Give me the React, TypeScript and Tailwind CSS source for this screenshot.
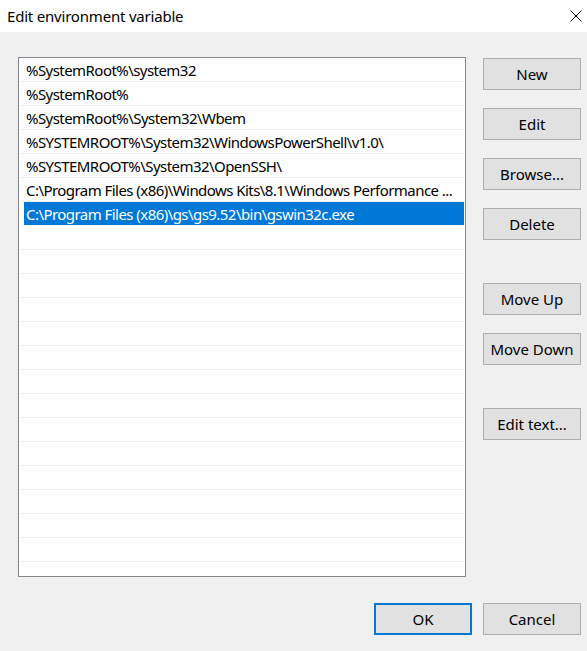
import React from 'react'

const PATHS = [
  '%SystemRoot%\\system32',
  '%SystemRoot%',
  '%SystemRoot%\\System32\\Wbem',
  '%SYSTEMROOT%\\System32\\WindowsPowerShell\\v1.0\\',
  '%SYSTEMROOT%\\System32\\OpenSSH\\',
  'C:\\Program Files (x86)\\Windows Kits\\8.1\\Windows Performance ...',
  'C:\\Program Files (x86)\\gs\\gs9.52\\bin\\gswin32c.exe',
]

const SELECTED = 6
const TOTAL_ROWS = 22

function WinButton({ label, primary }: { label: string; primary?: boolean }) {
  return (
    <button
      className={`w-[98px] h-[32px] shrink-0 bg-[#e1e1e1] text-black text-[15px] leading-none ${
        primary ? 'border-2 border-[#0078d7]' : 'border border-[#adadad]'
      }`}
    >
      {label}
    </button>
  )
}

export default function App() {
  const rows: (string | null)[] = [
    ...PATHS,
    ...Array(TOTAL_ROWS - PATHS.length).fill(null),
  ]

  return (
    <div
      className="w-[587px] h-[651px] bg-[#f0f0f0] flex flex-col overflow-hidden"
      style={{ fontFamily: '"Noto Sans", "Open Sans", sans-serif' }}
    >
      {/* title bar */}
      <div className="h-[32px] bg-white flex items-center justify-between pl-[7px] pr-[5px] shrink-0">
        <span className="text-[15px] text-black tracking-[-0.2px]">Edit environment variable</span>
        <svg width="12" height="12" viewBox="0 0 12 12">
          <path d="M0.5 0.5 L11.5 11.5 M11.5 0.5 L0.5 11.5" stroke="#000" strokeWidth="1" />
        </svg>
      </div>

      <div className="flex pt-[25px] pl-[18px] gap-[17px]">
        {/* list box */}
        <div className="w-[448px] h-[520px] border border-[#828790] bg-white overflow-hidden shrink-0">
          {rows.map((p, i) => (
            <div
              key={i}
              className={`h-[24px] mx-px border-b ${
                i === SELECTED ? 'border-white' : 'border-[#f0f0f0]'
              }`}
            >
              <div
                className={`h-full flex items-center pt-[2px] pr-[2px] ${
                  i === SELECTED ? 'ml-[4px] pl-[2px] bg-[#0078d7] text-white' : 'pl-[6px] text-black'
                }`}
              >
                {p && <span className="whitespace-nowrap text-[15px] tracking-[-0.55px]">{p}</span>}
              </div>
            </div>
          ))}
        </div>

        {/* buttons */}
        <div className="flex flex-col gap-[18px] pt-px">
          <WinButton label="New" />
          <WinButton label="Edit" />
          <WinButton label="Browse..." />
          <WinButton label="Delete" />
          <div className="h-[7px]" />
          <WinButton label="Move Up" />
          <WinButton label="Move Down" />
          <div className="h-[7px]" />
          <WinButton label="Edit text..." />
        </div>
      </div>

      <div className="flex justify-end gap-[11px] pr-[6px] pt-[26px]">
        <WinButton label="OK" primary />
        <WinButton label="Cancel" />
      </div>
    </div>
  )
}
